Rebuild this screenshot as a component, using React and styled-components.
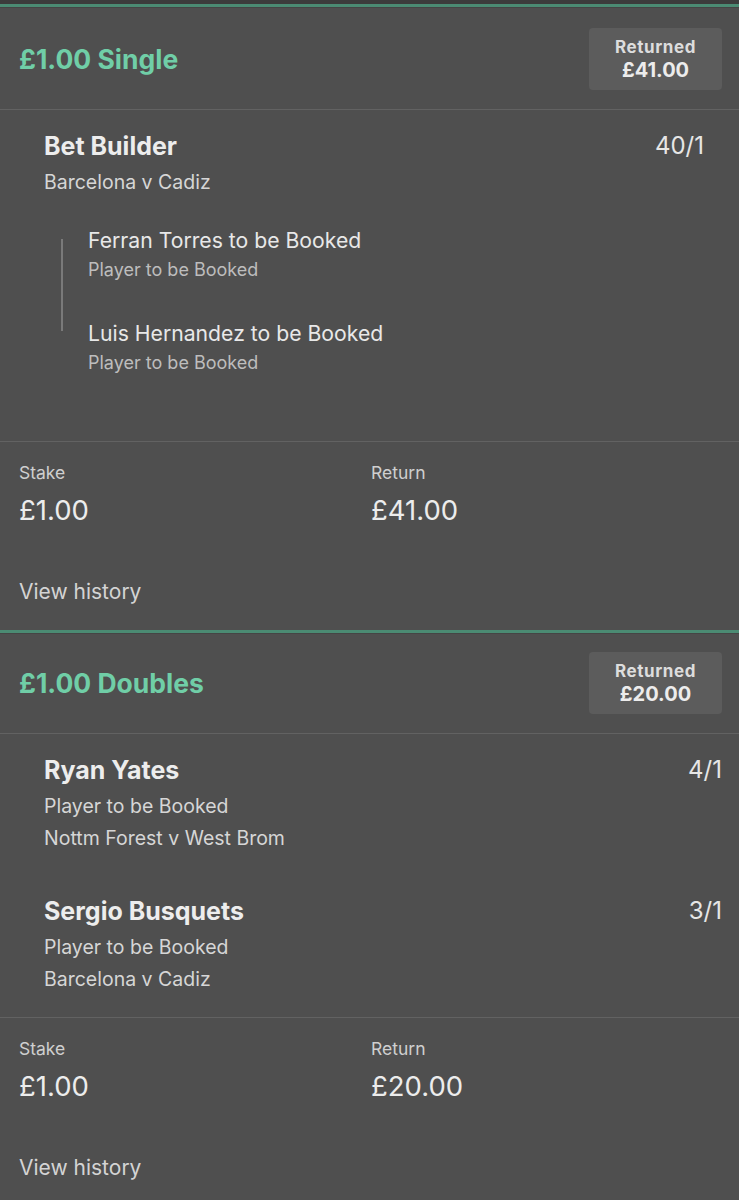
import React from 'react';
import styled, { createGlobalStyle } from 'styled-components';

const GlobalStyle = createGlobalStyle`
  html, body {
    margin: 0;
    padding: 0;
    background: #4f4f4f;
  }
  body {
    font-family: Inter, "Open Sans", "Liberation Sans", sans-serif;
    -webkit-font-smoothing: antialiased;
  }
`;

const Page = styled.div`
  width: 739px;
  padding-top: 4px;
  background: #3c3c3c;
`;

const Section = styled.section`
  background: #4f4f4f;
  border-top: 3px solid #4b8b73;
  box-shadow: inset 0 1px 0 #454545;
  padding-top: 1px;
`;

const Header = styled.div`
  display: flex;
  align-items: center;
  justify-content: space-between;
  padding: ${p => p.$top}px 17px ${p => p.$bottom}px 19px;
  border-bottom: 1px solid #626262;
`;

const BetTitle = styled.h2`
  margin: 0;
  font-size: 26.5px;
  font-weight: 700;
  color: #70cea7;
`;

const ReturnedBox = styled.div`
  width: 133px;
  height: 62px;
  box-sizing: border-box;
  display: flex;
  flex-direction: column;
  align-items: center;
  justify-content: center;
  background: #5c5c5c;
  border-radius: 4px;
  color: #ececec;
  font-weight: 700;
`;

const ReturnedLabel = styled.div`
  font-size: 17px;
  line-height: 22px;
  letter-spacing: 0.6px;
  color: #dddddd;
`;

const ReturnedValue = styled.div`
  font-size: 20px;
  line-height: 24px;
`;

const Legs = styled.div`
  display: flex;
  flex-direction: column;
  gap: ${p => p.$gap}px;
  padding: 20px ${p => p.$right}px ${p => p.$bottom}px 44px;
  border-bottom: 1px solid #626262;
`;

const Leg = styled.div``;

const LegRow = styled.div`
  display: flex;
  justify-content: space-between;
  align-items: center;
  line-height: 32px;
`;

const LegName = styled.div`
  font-size: 25px;
  font-weight: 700;
  color: #ededed;
`;

const Odds = styled.div`
  font-size: 24px;
  font-weight: 400;
  color: #e6e6e6;
`;

const LegSub = styled.div`
  margin-top: 8px;
  font-size: 19.5px;
  line-height: 24px;
  color: #d6d6d6;
`;

const Selections = styled.div`
  position: relative;
  display: flex;
  flex-direction: column;
  gap: 39px;
  margin-top: 33px;
  padding-left: 44px;

  &::before {
    content: '';
    position: absolute;
    left: 17px;
    top: 12px;
    height: 92px;
    width: 2px;
    background: #7a7a7a;
  }
`;

const Selection = styled.div``;

const SelName = styled.div`
  font-size: 21.2px;
  line-height: 26px;
  color: #e8e8e8;
`;

const SelMarket = styled.div`
  margin-top: 6px;
  font-size: 18px;
  line-height: 22px;
  color: #bdbdbd;
`;

const Footer = styled.div`
  padding: 20px 19px 25px;
`;

const Totals = styled.div`
  display: grid;
  grid-template-columns: 352px 1fr;
`;

const Total = styled.div``;

const TotalLabel = styled.div`
  font-size: 17.5px;
  line-height: 22px;
  color: #cfcfcf;
`;

const TotalValue = styled.div`
  margin-top: 10px;
  font-size: 27.5px;
  line-height: 32px;
  color: #ececec;
`;

const HistoryLink = styled.a`
  display: block;
  margin-top: 53px;
  font-size: 21px;
  line-height: 26px;
  color: #d4d4d4;
  text-decoration: none;
`;

const bets = [
  {
    id: 1,
    title: '£1.00 Single',
    returned: '£41.00',
    stake: '£1.00',
    ret: '£41.00',
    headTop: 20,
    headBottom: 19,
    right: 35,
    bottom: 67,
    gap: 45,
    legs: [
      {
        name: 'Bet Builder',
        odds: '40/1',
        subs: ['Barcelona v Cadiz'],
        selections: [
          { name: 'Ferran Torres to be Booked', market: 'Player to be Booked' },
          { name: 'Luis Hernandez to be Booked', market: 'Player to be Booked' },
        ],
      },
    ],
  },
  {
    id: 2,
    title: '£1.00 Doubles',
    returned: '£20.00',
    stake: '£1.00',
    ret: '£20.00',
    headTop: 18,
    headBottom: 19,
    right: 17,
    bottom: 26,
    gap: 45,
    legs: [
      { name: 'Ryan Yates', odds: '4/1', subs: ['Player to be Booked', 'Nottm Forest v West Brom'] },
      { name: 'Sergio Busquets', odds: '3/1', subs: ['Player to be Booked', 'Barcelona v Cadiz'] },
    ],
  },
];

const App = () => (
  <>
    <GlobalStyle />
    <Page>
      {bets.map(bet => (
        <Section key={bet.id}>
          <Header $top={bet.headTop} $bottom={bet.headBottom}>
            <BetTitle>{bet.title}</BetTitle>
            <ReturnedBox>
              <ReturnedLabel>Returned</ReturnedLabel>
              <ReturnedValue>{bet.returned}</ReturnedValue>
            </ReturnedBox>
          </Header>
          <Legs $right={bet.right} $bottom={bet.bottom} $gap={bet.gap}>
            {bet.legs.map(leg => (
              <Leg key={leg.name}>
                <LegRow>
                  <LegName>{leg.name}</LegName>
                  <Odds>{leg.odds}</Odds>
                </LegRow>
                {leg.subs.map(s => <LegSub key={s}>{s}</LegSub>)}
                {leg.selections && (
                  <Selections>
                    {leg.selections.map(sel => (
                      <Selection key={sel.name}>
                        <SelName>{sel.name}</SelName>
                        <SelMarket>{sel.market}</SelMarket>
                      </Selection>
                    ))}
                  </Selections>
                )}
              </Leg>
            ))}
          </Legs>
          <Footer>
            <Totals>
              <Total>
                <TotalLabel>Stake</TotalLabel>
                <TotalValue>{bet.stake}</TotalValue>
              </Total>
              <Total>
                <TotalLabel>Return</TotalLabel>
                <TotalValue>{bet.ret}</TotalValue>
              </Total>
            </Totals>
            <HistoryLink href="#">View history</HistoryLink>
          </Footer>
        </Section>
      ))}
    </Page>
  </>
);

export default App;
